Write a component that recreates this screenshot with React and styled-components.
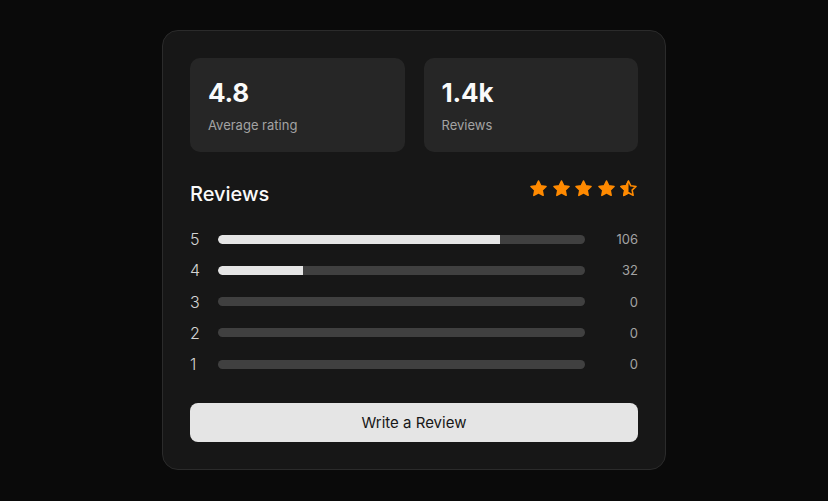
import React from "react";
import styled, { createGlobalStyle } from "styled-components";

const GlobalStyle = createGlobalStyle`
  html, body {
    margin: 0;
    padding: 0;
    background: #0a0a0a;
    font-family: Inter, "Liberation Sans", sans-serif;
  }
`;

const Page = styled.div`
  min-height: 501px;
  display: flex;
  justify-content: center;
  padding-top: 30px;
  box-sizing: border-box;
`;

const Card = styled.div`
  width: 504px;
  height: 440px;
  box-sizing: border-box;
  background: #171717;
  border: 1px solid #2b2b2b;
  border-radius: 16px;
  padding: 27px;
  display: flex;
  flex-direction: column;
`;

const Stats = styled.div`
  display: grid;
  grid-template-columns: 1fr 1fr;
  gap: 19px;
`;

const StatBox = styled.div`
  height: 94px;
  box-sizing: border-box;
  background: #262626;
  border-radius: 10px;
  padding: 20px 18px;
`;

const StatValue = styled.div`
  color: #fafafa;
  font-size: 26px;
  font-weight: 700;
  line-height: 30px;
  letter-spacing: -0.2px;
`;

const StatLabel = styled.div`
  color: #a3a3a3;
  font-size: 13px;
  line-height: 20px;
  margin-top: 7px;
`;

const Header = styled.div`
  display: flex;
  justify-content: space-between;
  align-items: flex-start;
  margin-top: 28px;
`;

const Title = styled.h2`
  margin: 0;
  color: #fafafa;
  font-size: 20px;
  font-weight: 500;
  line-height: 28px;
`;

const Stars = styled.div`
  display: flex;
  gap: 3.5px;
  margin-top: -1px;
`;

const Rows = styled.div`
  display: flex;
  flex-direction: column;
  gap: 11.25px;
  margin-top: 21px;
`;

const Row = styled.div`
  display: flex;
  align-items: center;
  height: 20px;
`;

const Level = styled.span`
  width: 28px;
  color: #d4d4d4;
  font-size: 16px;
  font-weight: 300;
`;

const Track = styled.div`
  width: 367px;
  height: 9px;
  border-radius: 5px;
  background: #404040;
  overflow: hidden;
`;

const Fill = styled.div`
  height: 100%;
  background: #e5e5e5;
  border-radius: 5px 0 0 5px;
`;

const Count = styled.span`
  flex: 1;
  text-align: right;
  color: #a3a3a3;
  font-size: 13px;
`;

const Button = styled.button`
  margin-top: 29px;
  height: 40px;
  border: none;
  border-radius: 8px;
  background: #e5e5e5;
  color: #171717;
  font-family: inherit;
  font-size: 15px;
  font-weight: 400;
  cursor: pointer;
`;

const STAR =
  "M12 2.5l2.9 6.1 6.6.8-4.9 4.6 1.3 6.6L12 17.3l-5.9 3.3 1.3-6.6-4.9-4.6 6.6-.8z";

function Star({ half }) {
  return (
    <svg width="19" height="19" viewBox="0 0 24 24">
      <defs>
        <clipPath id="lefthalf">
          <rect x="0" y="0" width="12" height="24" />
        </clipPath>
      </defs>
      {half ? (
        <>
          <path d={STAR} fill="none" stroke="#ff8a00" strokeWidth="2" strokeLinejoin="round" />
          <path d={STAR} fill="#ff8a00" stroke="#ff8a00" strokeWidth="2" strokeLinejoin="round" clipPath="url(#lefthalf)" />
        </>
      ) : (
        <path d={STAR} fill="#ff8a00" stroke="#ff8a00" strokeWidth="2" strokeLinejoin="round" />
      )}
    </svg>
  );
}

const ratings = [
  { level: 5, count: 106 },
  { level: 4, count: 32 },
  { level: 3, count: 0 },
  { level: 2, count: 0 },
  { level: 1, count: 0 },
];

const total = ratings.reduce((s, r) => s + r.count, 0);

export default function App() {
  return (
    <>
      <GlobalStyle />
      <Page>
        <Card>
          <Stats>
            <StatBox>
              <StatValue>4.8</StatValue>
              <StatLabel>Average rating</StatLabel>
            </StatBox>
            <StatBox>
              <StatValue>1.4k</StatValue>
              <StatLabel>Reviews</StatLabel>
            </StatBox>
          </Stats>
          <Header>
            <Title>Reviews</Title>
            <Stars>
              <Star />
              <Star />
              <Star />
              <Star />
              <Star half />
            </Stars>
          </Header>
          <Rows>
            {ratings.map((r) => (
              <Row key={r.level}>
                <Level>{r.level}</Level>
                <Track>
                  <Fill style={{ width: `${(r.count / total) * 100}%` }} />
                </Track>
                <Count>{r.count}</Count>
              </Row>
            ))}
          </Rows>
          <Button>Write a Review</Button>
        </Card>
      </Page>
    </>
  );
}
